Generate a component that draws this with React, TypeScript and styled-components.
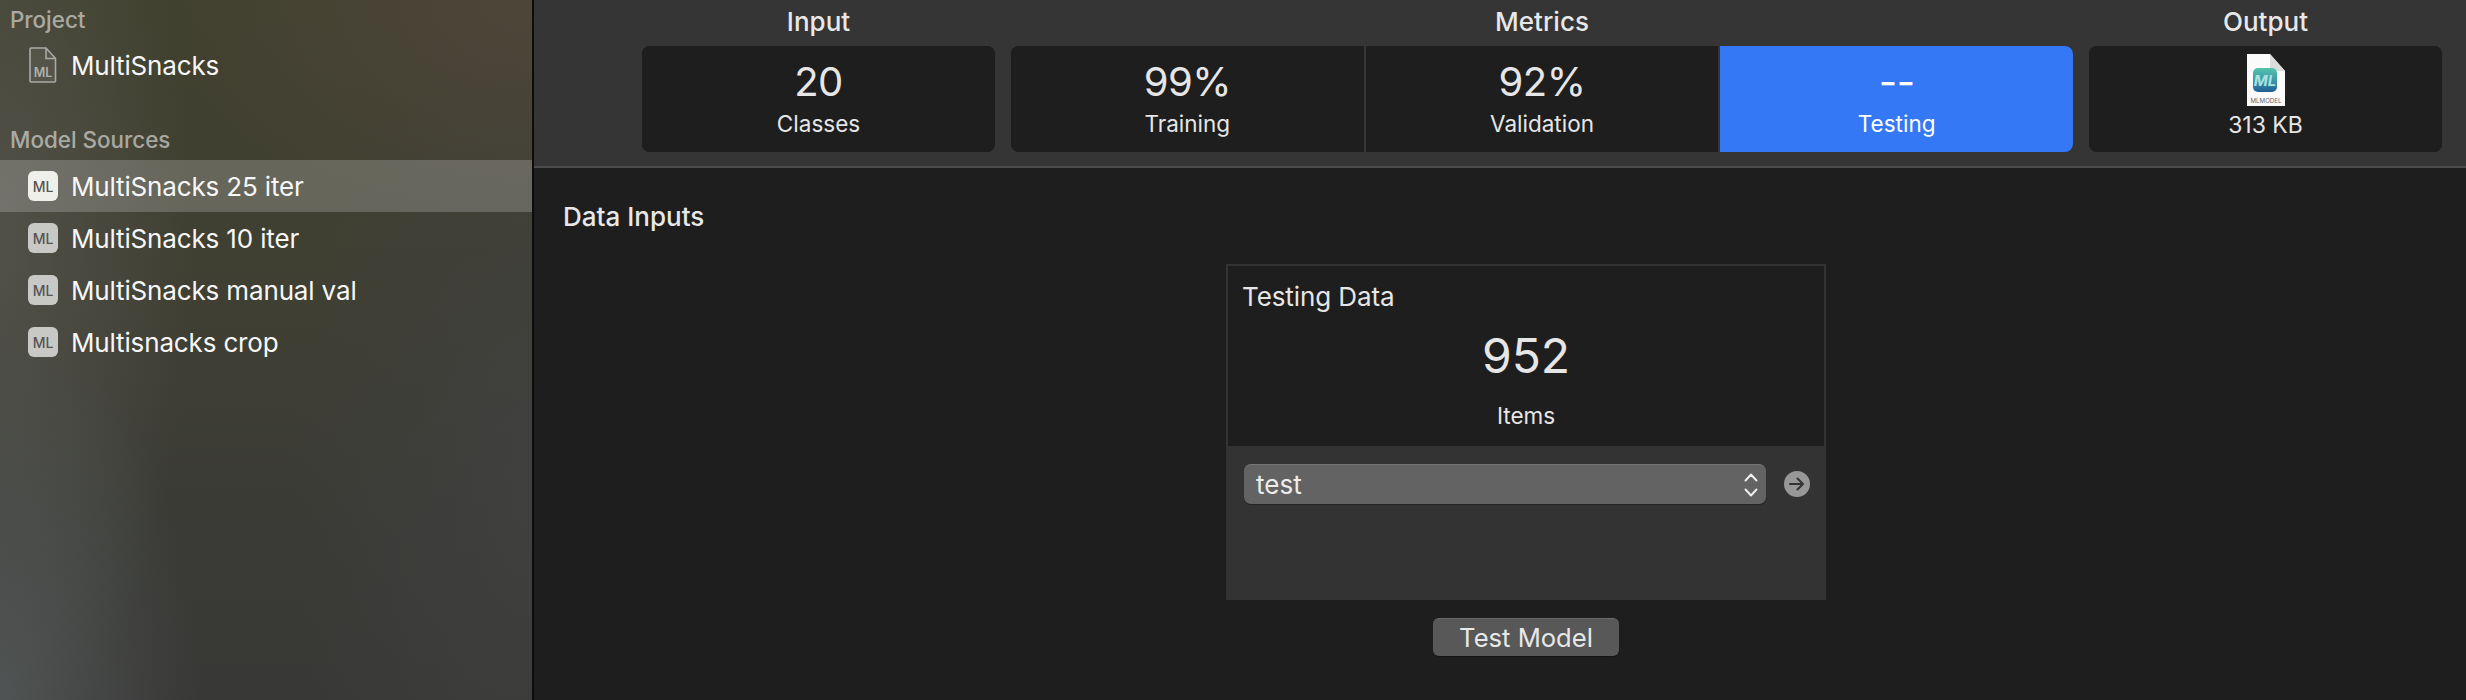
import React from "react";
import styled, { createGlobalStyle } from "styled-components";

const Global = createGlobalStyle`
  html, body { margin: 0; padding: 0; background: #1e1e1e; }
  body { font-family: Inter, "Liberation Sans", sans-serif; -webkit-font-smoothing: antialiased; }
`;

const Shell = styled.div`
  display: flex;
  width: 2466px;
  height: 700px;
  overflow: hidden;
`;

const Sidebar = styled.aside`
  width: 532px;
  flex: none;
  border-right: 2px solid #0c0c0c;
  background:
    radial-gradient(ellipse 200px 380px at 0% 100%, rgba(84, 88, 88, 0.85), rgba(80, 84, 84, 0) 100%),
    radial-gradient(ellipse 190px 520px at 0% 35%, rgba(92, 92, 88, 0.6), rgba(84, 84, 80, 0) 100%),
    radial-gradient(ellipse 360px 240px at 100% 0%, rgba(80, 71, 60, 0.8), rgba(80, 71, 60, 0) 100%),
    radial-gradient(ellipse 240px 500px at 100% 70%, rgba(64, 64, 64, 0.9), rgba(64, 64, 64, 0) 100%),
    linear-gradient(180deg, #41412f 0%, #3f3f33 45%, #3a3b36 75%, #383836 100%);
`;

const SectionLabel = styled.div<{ $top: number; $bottom?: number }>`
  padding-left: 10px;
  margin-top: ${(p) => p.$top}px;
  margin-bottom: ${(p) => p.$bottom ?? 0}px;
  height: 28px;
  line-height: 28px;
  font-size: 22.4px;
  font-weight: 500;
  color: rgba(255, 255, 255, 0.55);
`;

const Row = styled.div<{ $active?: boolean; $h?: number }>`
  display: flex;
  align-items: center;
  height: ${(p) => p.$h ?? 52}px;
  padding-left: 28px;
  background: ${(p) => (p.$active ? "rgba(255, 255, 255, 0.2)" : "transparent")};
`;

const IconSlot = styled.div`
  width: 30px;
  flex: none;
  display: flex;
  justify-content: center;
  margin-right: 13px;
`;

const RowText = styled.span`
  font-size: 26px;
  color: #f7f7f7;
  letter-spacing: -0.15px;
  white-space: nowrap;
`;

const Badge = styled.div<{ $active?: boolean }>`
  width: 30px;
  height: 30px;
  border-radius: 6px;
  background: ${(p) => (p.$active ? "#f0f0ea" : "#c8c8c4")};
  color: #555;
  font-size: 14px;
  font-weight: 500;
  display: flex;
  align-items: center;
  justify-content: center;
`;

const Main = styled.main`
  flex: 1;
  min-width: 0;
  display: flex;
  flex-direction: column;
`;

const Header = styled.header`
  height: 166px;
  flex: none;
  box-sizing: content-box;
  border-bottom: 2px solid #4c4c4c;
  background: #353535;
  padding: 0 24px 0 108px;
  display: grid;
  grid-template-columns: 353px 1062px 353px;
  column-gap: 16px;
`;

const Group = styled.section`
  display: flex;
  flex-direction: column;
`;

const GroupTitle = styled.div`
  height: 46px;
  padding-bottom: 4px;
  box-sizing: border-box;
  display: flex;
  align-items: center;
  justify-content: center;
  font-size: 26px;
  font-weight: 500;
  color: #e8e8e8;
`;

const CardRow = styled.div`
  display: flex;
  height: 106px;
  border-radius: 8px;
  overflow: hidden;
  background: #1e1e1e;
`;

const Stat = styled.div<{ $selected?: boolean; $divider?: boolean }>`
  flex: 1;
  position: relative;
  display: flex;
  flex-direction: column;
  align-items: center;
  background: ${(p) => (p.$selected ? "#3478f6" : "#1e1e1e")};
  border-left: ${(p) => (p.$divider ? "2px solid #363636" : "none")};
  color: ${(p) => (p.$selected ? "#ffffff" : "#e6e6e6")};
`;

const StatValue = styled.div`
  height: 60px;
  padding-top: 10px;
  box-sizing: border-box;
  display: flex;
  align-items: center;
  font-size: 40px;
  font-weight: 400;
  letter-spacing: -0.5px;
`;

const StatLabel = styled.div`
  height: 34px;
  display: flex;
  align-items: center;
  font-size: 22.5px;
  font-weight: 400;
`;

const OutputIconWrap = styled.div`
  height: 64px;
  padding-top: 8px;
  box-sizing: border-box;
`;

const OutputLabel = styled(StatLabel)`
  height: 30px;
  font-size: 23px;
`;

const Body = styled.div`
  flex: 1;
  background: #1e1e1e;
  display: flex;
  flex-direction: column;
  padding: 0 24px 0 28px;
`;

const BodyTitle = styled.h2`
  margin: 33px 0 0 1px;
  height: 32px;
  line-height: 32px;
  font-size: 26px;
  font-weight: 500;
  color: #e8e8e8;
`;

const Panel = styled.section`
  margin: 31px 0 0 664px;
  width: 600px;
  box-sizing: border-box;
`;

const PanelTop = styled.div`
  height: 182px;
  box-sizing: border-box;
  border: 2px solid #333;
  border-bottom: none;
  padding: 0 14px;
  display: flex;
  flex-direction: column;
  color: #e6e6e6;
`;

const PanelTitle = styled.div`
  margin-top: 15px;
  height: 32px;
  line-height: 32px;
  font-size: 26px;
  letter-spacing: -0.1px;
`;

const PanelValue = styled.div`
  margin-top: 13px;
  height: 60px;
  line-height: 60px;
  font-size: 48px;
  text-align: center;
`;

const PanelLabel = styled.div`
  margin-top: 15px;
  height: 30px;
  line-height: 30px;
  font-size: 22.5px;
  text-align: center;
`;

const PanelBottom = styled.div`
  height: 154px;
  background: #333;
  padding: 18px 16px 0 18px;
  box-sizing: border-box;
  display: flex;
  align-items: flex-start;
  gap: 18px;
`;

const Select = styled.div`
  width: 522px;
  height: 40px;
  box-sizing: border-box;
  border-radius: 7px;
  background: #636363;
  border-top: 1px solid #757575;
  box-shadow: 0 1px 1px rgba(0, 0, 0, 0.3);
  padding: 0 7px 0 12px;
  display: flex;
  align-items: center;
  justify-content: space-between;
  font-size: 26px;
  color: #ececec;
`;

const ArrowButton = styled.div`
  width: 26px;
  height: 26px;
  flex: none;
  margin-top: 7px;
  display: flex;
`;

const ButtonRow = styled.div`
  margin: 18px 0 0 664px;
  width: 600px;
  display: flex;
  justify-content: center;
`;

const TestButton = styled.button`
  width: 186px;
  height: 38px;
  padding: 0 0 1px;
  border: none;
  border-top: 1px solid #6a6a6a;
  border-radius: 6px;
  background: #585858;
  box-shadow: 0 1px 1px rgba(0, 0, 0, 0.3);
  font-family: inherit;
  font-size: 25.6px;
  color: #e8e8e8;
`;

const ProjectFileIcon = () => (
  <svg width="28" height="36" viewBox="0 0 28 36" fill="none">
    <path
      d="M2 1h15l9.5 10.5V34a1 1 0 0 1-1 1H2a1 1 0 0 1-1-1V2a1 1 0 0 1 1-1z"
      fill="rgba(255,255,255,0.06)"
      stroke="#aaaaa8"
      strokeWidth="1.6"
    />
    <path d="M17 1v10.500h9.500" stroke="#aaaaa8" strokeWidth="1.6" fill="none" />
    <text x="14" y="30" textAnchor="middle" fontFamily="Inter, sans-serif" fontSize="12.5" fontWeight="600" fill="#b0b0ae">
      ML
    </text>
  </svg>
);

const ModelFileIcon = () => (
  <svg width="38" height="52" viewBox="0 0 38 52">
    <defs>
      <linearGradient id="mlgrad" x1="0" y1="0" x2="0" y2="1">
        <stop offset="0" stopColor="#53c4ab" />
        <stop offset="0.55" stopColor="#3a97a8" />
        <stop offset="1" stopColor="#1f5c95" />
      </linearGradient>
    </defs>
    <path d="M0 0h23l15 17v35H0z" fill="#fbfbfb" />
    <path d="M23 0l15 17H25a2 2 0 0 1-2-2z" fill="#dcdcdc" />
    <rect x="6" y="14" width="24" height="24" rx="5" fill="url(#mlgrad)" />
    <text x="18" y="32" textAnchor="middle" fontFamily="Inter, sans-serif" fontSize="15" fontStyle="italic" fontWeight="700" fill="#a9e3e0">
      ML
    </text>
    <text x="19" y="49" textAnchor="middle" fontFamily="Inter, sans-serif" fontSize="6.2" fill="#666">
      MLMODEL
    </text>
  </svg>
);

const Stepper = () => (
  <svg width="16" height="30" viewBox="0 0 16 30" fill="none" stroke="#f0f0f0" strokeWidth="1.9" strokeLinecap="round" strokeLinejoin="round">
    <path d="M2.500 10.500L8 4.500 13.500 10.500" />
    <path d="M2.500 19.500L8 25.500 13.500 19.500" />
  </svg>
);

const GoArrow = () => (
  <svg width="26" height="26" viewBox="0 0 26 26" fill="none">
    <circle cx="13" cy="13" r="13" fill="#979797" />
    <path d="M6 13h13M13.500 7.500L19 13l-5.500 5.500" stroke="#333" strokeWidth="2" strokeLinecap="round" strokeLinejoin="round" />
  </svg>
);

const sources = ["MultiSnacks 25 iter", "MultiSnacks 10 iter", "MultiSnacks manual val", "Multisnacks crop"];

const metrics = [
  { value: "99%", label: "Training" },
  { value: "92%", label: "Validation" },
  { value: "--", label: "Testing", selected: true },
];

export default function App() {
  return (
    <Shell>
      <Global />
      <Sidebar>
        <SectionLabel $top={6}>Project</SectionLabel>
        <Row $h={62}>
          <IconSlot>
            <ProjectFileIcon />
          </IconSlot>
          <RowText>MultiSnacks</RowText>
        </Row>
        <SectionLabel $top={30} $bottom={6}>
          Model Sources
        </SectionLabel>
        {sources.map((name, i) => (
          <Row key={name} $active={i === 0}>
            <IconSlot>
              <Badge $active={i === 0}>ML</Badge>
            </IconSlot>
            <RowText>{name}</RowText>
          </Row>
        ))}
      </Sidebar>
      <Main>
        <Header>
          <Group>
            <GroupTitle>Input</GroupTitle>
            <CardRow>
              <Stat>
                <StatValue>20</StatValue>
                <StatLabel>Classes</StatLabel>
              </Stat>
            </CardRow>
          </Group>
          <Group>
            <GroupTitle>Metrics</GroupTitle>
            <CardRow>
              {metrics.map((m, i) => (
                <Stat key={m.label} $selected={m.selected} $divider={i > 0}>
                  <StatValue>{m.value}</StatValue>
                  <StatLabel>{m.label}</StatLabel>
                </Stat>
              ))}
            </CardRow>
          </Group>
          <Group>
            <GroupTitle>Output</GroupTitle>
            <CardRow>
              <Stat>
                <OutputIconWrap>
                  <ModelFileIcon />
                </OutputIconWrap>
                <OutputLabel>313 KB</OutputLabel>
              </Stat>
            </CardRow>
          </Group>
        </Header>
        <Body>
          <BodyTitle>Data Inputs</BodyTitle>
          <Panel>
            <PanelTop>
              <PanelTitle>Testing Data</PanelTitle>
              <PanelValue>952</PanelValue>
              <PanelLabel>Items</PanelLabel>
            </PanelTop>
            <PanelBottom>
              <Select>
                test
                <Stepper />
              </Select>
              <ArrowButton>
                <GoArrow />
              </ArrowButton>
            </PanelBottom>
          </Panel>
          <ButtonRow>
            <TestButton>Test Model</TestButton>
          </ButtonRow>
        </Body>
      </Main>
    </Shell>
  );
}
